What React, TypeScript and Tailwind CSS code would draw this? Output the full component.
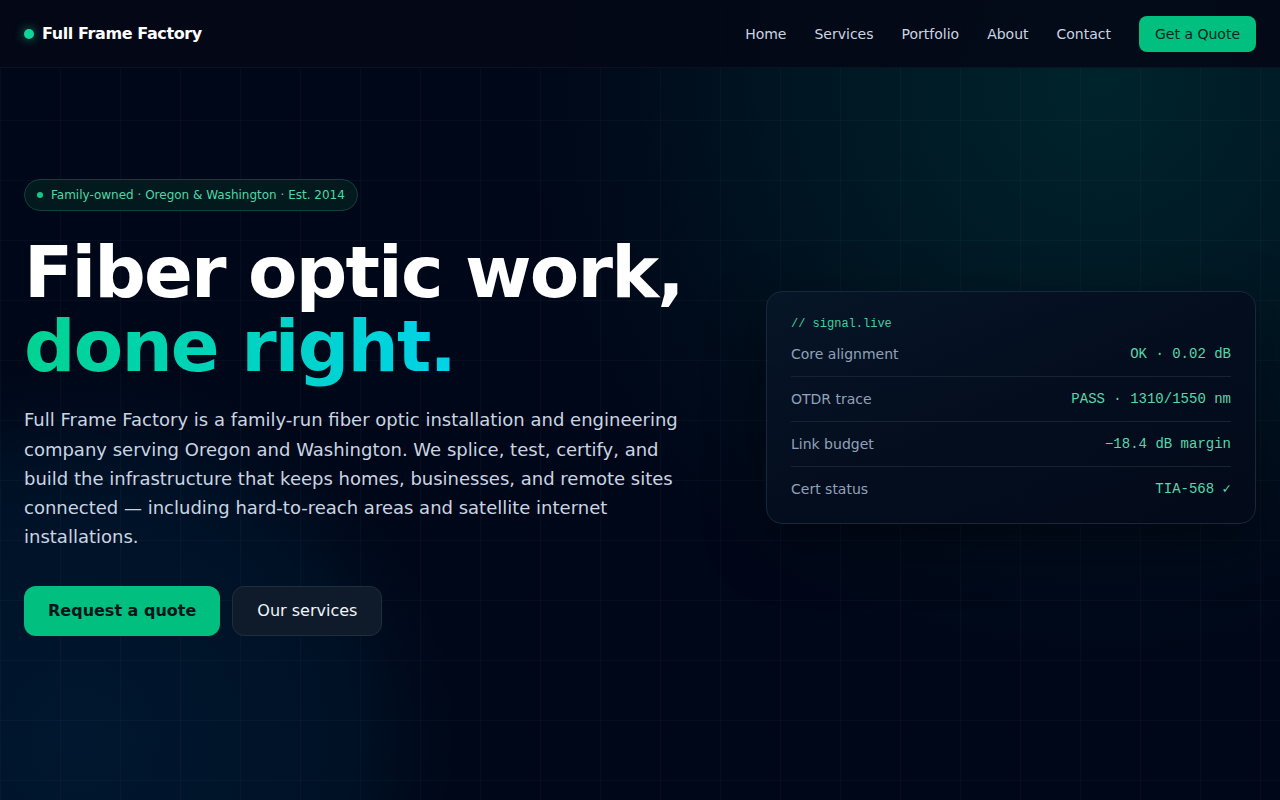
import React from 'react'

const sans = "font-['DejaVu_Sans','Liberation_Sans',sans-serif]"
const mono = "font-['Liberation_Mono','DejaVu_Sans_Mono',monospace]"

const navLinks = ['Home', 'Services', 'Portfolio', 'About', 'Contact']

const readings = [
  { label: 'Core alignment', value: 'OK · 0.02 dB' },
  { label: 'OTDR trace', value: 'PASS · 1310/1550 nm' },
  { label: 'Link budget', value: '−18.4 dB margin' },
  { label: 'Cert status', value: 'TIA-568 ✓' },
]

function Header() {
  return (
    <header className="relative z-10 h-[68px] border-b border-white/[0.04] bg-[#030816]/90">
      <div className="flex h-full items-center justify-between px-6">
        <a className="flex items-center gap-2">
          <span className="h-2.5 w-2.5 rounded-full bg-[#10d49a] shadow-[0_0_10px_2px_rgba(16,212,154,0.35)]" />
          <span className="text-base font-bold tracking-tight text-white">Full Frame Factory</span>
        </a>
        <nav className="flex items-center gap-7">
          {navLinks.map((link) => (
            <a key={link} className="text-sm text-slate-300">
              {link}
            </a>
          ))}
          <a className="rounded-lg bg-[#00bf7f] px-4 py-2 text-sm leading-5 text-[#04261c]">Get a Quote</a>
        </nav>
      </div>
    </header>
  )
}

function SignalCard() {
  return (
    <div className="w-[490px] rounded-2xl border border-[#17283a] bg-gradient-to-br from-[#071628]/90 via-[#040d1e]/95 to-[#030a1a]/95 px-6 pb-3 pt-6 shadow-[0_20px_60px_rgba(0,0,0,0.4)]">
      <p className={`${mono} text-xs leading-4 text-[#3fd0a0]`}>// signal.live</p>
      <ul>
        {readings.map((row, i) => (
          <li
            key={row.label}
            className={`flex items-center justify-between py-3 ${i < readings.length - 1 ? 'border-b border-[#15242f]' : ''}`}
          >
            <span className="text-sm leading-5 text-slate-400">{row.label}</span>
            <span className={`${mono} text-sm leading-5 text-[#55d8ab]`}>{row.value}</span>
          </li>
        ))}
      </ul>
    </div>
  )
}

export default function App() {
  return (
    <div className={`${sans} relative min-h-[800px] overflow-hidden bg-[#000718] text-white`}>
      {/* background: glows + faint grid */}
      <div className="pointer-events-none absolute inset-0">
        <div className="absolute -right-[420px] -top-[520px] h-[1200px] w-[1200px] rounded-full bg-[radial-gradient(circle,rgba(0,60,60,0.55)_0%,rgba(0,45,50,0.4)_35%,rgba(0,30,40,0.2)_55%,transparent_70%)]" />
        <div className="absolute -left-[300px] top-[360px] h-[760px] w-[760px] rounded-full bg-[radial-gradient(circle,rgba(0,40,70,0.5)_0%,rgba(0,32,58,0.4)_50%,rgba(0,25,45,0.2)_62%,transparent_70%)]" />
        <div className="absolute inset-0 bg-[linear-gradient(to_right,rgba(80,130,160,0.055)_1px,transparent_1px),linear-gradient(to_bottom,rgba(80,130,160,0.055)_1px,transparent_1px)] bg-[size:60px_60px]" />
      </div>

      <Header />

      <main className="relative px-6 pt-[111px]">
        <div className="flex items-center justify-between">
          <div className="max-w-2xl">
            <span className="inline-flex items-center gap-2 rounded-full border border-[#12403c] bg-[#021a1d] px-3 py-[7px] text-xs leading-4 text-[#4fd6a8]">
              <span className="h-1.5 w-1.5 rounded-full bg-[#10c98f]" />
              Family-owned · Oregon &amp; Washington · Est. 2014
            </span>

            <h1 className="mt-6 whitespace-nowrap text-7xl font-bold leading-[1.03] tracking-tight text-white">
              Fiber optic work,
              <br />
              <span className="bg-gradient-to-r from-[#00d391] to-[#00d2ea] bg-clip-text text-transparent">done right.</span>
            </h1>

            <p className="mt-[22px] text-lg leading-[1.625] text-slate-300">
              Full Frame Factory is a family-run fiber optic installation and engineering company serving Oregon and
              Washington. We splice, test, certify, and build the infrastructure that keeps homes, businesses, and
              remote sites connected — including hard-to-reach areas and satellite internet installations.
            </p>

            <div className="mt-[34px] flex gap-3">
              <a className="rounded-xl bg-[#00bf7f] px-6 py-[13px] text-base font-bold leading-6 text-[#03151a]">
                Request a quote
              </a>
              <a className="rounded-xl border border-[#1e2f3c] bg-[#0f1b2b] px-6 py-3 text-base leading-6 text-slate-100">
                Our services
              </a>
            </div>
          </div>

          <SignalCard />
        </div>
      </main>
    </div>
  )
}
